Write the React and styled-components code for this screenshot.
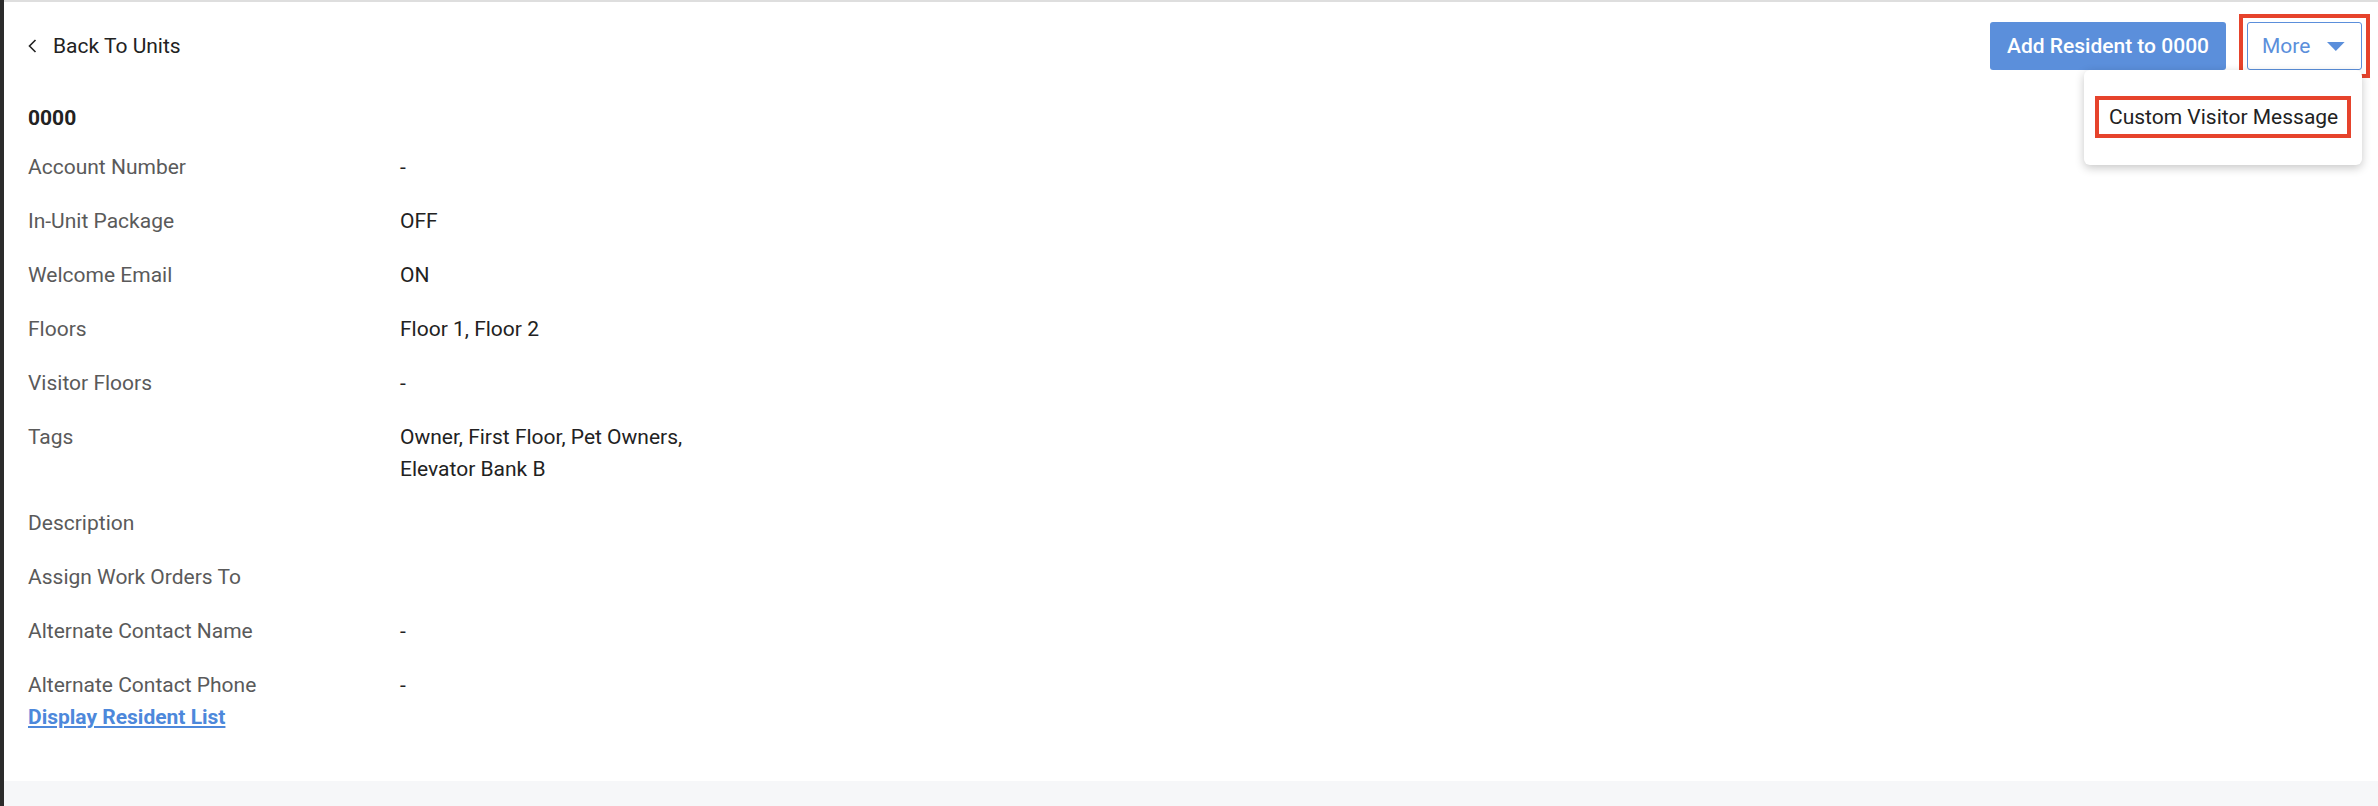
import React from 'react';
import styled, { createGlobalStyle } from 'styled-components';

const GlobalStyle = createGlobalStyle`
    html, body {
        margin: 0;
        padding: 0;
        background: #f6f7f9;
        font-family: Roboto, 'Liberation Sans', sans-serif;
    }
`;

const Frame = styled.div`
    min-height: 100vh;
    border-left: 4px solid #2b2b2b;
    background: #f6f7f9;
    box-sizing: border-box;
`;

const Card = styled.div`
    background: #fff;
    border-top: 2px solid #dedede;
    padding: 20px 16px 48px 20px;
`;

const Header = styled.div`
    display: flex;
    justify-content: space-between;
    align-items: center;
    height: 48px;
`;

const BackLink = styled.a`
    display: flex;
    align-items: center;
    gap: 16px;
    padding-left: 4px;
    color: #222;
    font-size: 21px;
    text-decoration: none;
    cursor: pointer;
`;

const Actions = styled.div`
    display: flex;
    align-items: center;
    gap: 21px;
`;

const PrimaryButton = styled.button`
    height: 48px;
    padding: 0 17px;
    border: none;
    border-radius: 3px;
    background: #5b8fdb;
    color: #fff;
    font-family: inherit;
    font-size: 21px;
    font-weight: 500;
    cursor: pointer;
`;

const MoreWrap = styled.div`
    position: relative;
`;

// red annotation box drawn over a marked element
const Marked = styled.div`
    position: relative;

    &::after {
        content: '';
        position: absolute;
        inset: ${p => p.$inset || '-8px'};
        border: 4px solid #e6432c;
        pointer-events: none;
    }
`;

const OutlineButton = styled.button`
    display: flex;
    align-items: center;
    gap: 17px;
    height: 48px;
    width: 115px;
    padding: 0 16px 0 14px;
    box-sizing: border-box;
    border: 1.5px solid #5b8fdb;
    border-radius: 3px;
    background: #fff;
    color: #5b8fdb;
    font-family: inherit;
    font-size: 21px;
    cursor: pointer;
`;

const Menu = styled.div`
    position: absolute;
    top: 100%;
    right: 0;
    width: 278px;
    box-sizing: border-box;
    padding: 31px 16px 32px;
    background: #fff;
    border-radius: 6px;
    box-shadow: 0 3px 10px rgba(0, 0, 0, 0.22);
`;

const MenuItem = styled.div`
    display: inline-block;
    padding: 0 6px 0 9px;
    line-height: 32px;
    font-size: 21px;
    color: #222;
    white-space: nowrap;
`;

const UnitTitle = styled.div`
    margin: 32px 0 17px 4px;
    font-size: 21px;
    font-weight: 700;
    line-height: 32px;
    color: #222;
`;

const Details = styled.div`
    display: flex;
    flex-direction: column;
    gap: 22px;
    padding-left: 4px;
`;

const Row = styled.div`
    display: grid;
    grid-template-columns: 372px 300px;
    font-size: 21px;
    line-height: 32px;
`;

const Label = styled.div`
    color: #5a5a5a;
`;

const Value = styled.div`
    color: #222;
`;

const ResidentLink = styled.a`
    display: inline-block;
    margin-left: 4px;
    font-size: 21px;
    font-weight: 700;
    line-height: 32px;
    color: #4d88db;
    text-decoration: underline;
    cursor: pointer;
`;

const Chevron = () => (
    <svg width="9" height="14" viewBox="0 0 9 14" fill="none">
        <polyline points="7.5,1 1.5,7 7.5,13" stroke="#222" strokeWidth="1.6" />
    </svg>
);

const Caret = () => (
    <svg width="18" height="9" viewBox="0 0 18 9">
        <polygon points="0,0 18,0 9,9" fill="#5b8fdb" />
    </svg>
);

const rows = [
    ['Account Number', '-'],
    ['In-Unit Package', 'OFF'],
    ['Welcome Email', 'ON'],
    ['Floors', 'Floor 1, Floor 2'],
    ['Visitor Floors', '-'],
    ['Tags', 'Owner, First Floor, Pet Owners, Elevator Bank B'],
    ['Description', ''],
    ['Assign Work Orders To', ''],
    ['Alternate Contact Name', '-'],
    ['Alternate Contact Phone', '-'],
];

export default function App() {
    return (
        <Frame>
            <GlobalStyle />
            <Card>
                <Header>
                    <BackLink>
                        <Chevron />
                        Back To Units
                    </BackLink>
                    <Actions>
                        <PrimaryButton>Add Resident to 0000</PrimaryButton>
                        <MoreWrap>
                            <Marked>
                                <OutlineButton>
                                    More
                                    <Caret />
                                </OutlineButton>
                            </Marked>
                            <Menu>
                                <Marked $inset="-5px">
                                    <MenuItem>Custom Visitor Message</MenuItem>
                                </Marked>
                            </Menu>
                        </MoreWrap>
                    </Actions>
                </Header>

                <UnitTitle>0000</UnitTitle>

                <Details>
                    {rows.map(([label, value]) => (
                        <Row key={label}>
                            <Label>{label}</Label>
                            <Value>{value}</Value>
                        </Row>
                    ))}
                </Details>
                <ResidentLink>Display Resident List</ResidentLink>
            </Card>
        </Frame>
    );
}
